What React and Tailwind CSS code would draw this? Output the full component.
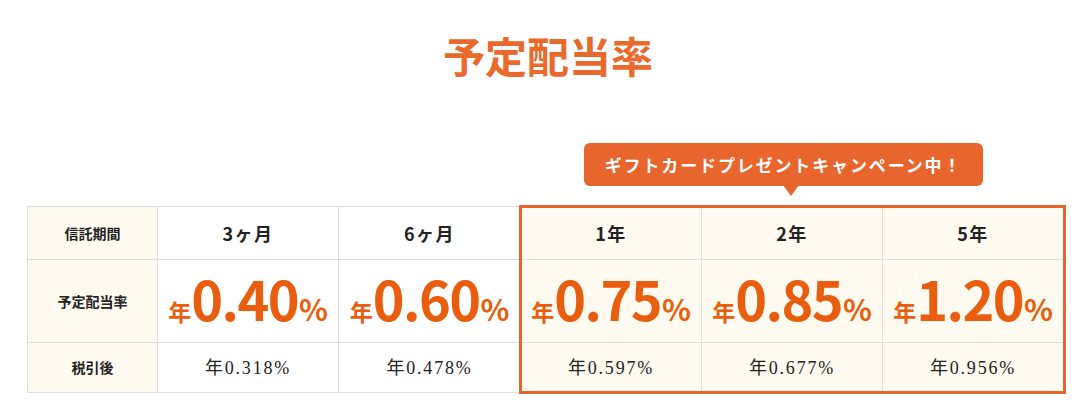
import React from "react";

const terms = [
  { label: "3ヶ月", rate: "0.40", net: "0.318", hl: false },
  { label: "6ヶ月", rate: "0.60", net: "0.478", hl: false },
  { label: "1年", rate: "0.75", net: "0.597", hl: true },
  { label: "2年", rate: "0.85", net: "0.677", hl: true },
  { label: "5年", rate: "1.20", net: "0.956", hl: true },
];

const jp = { fontFamily: '"Noto Sans CJK JP", "Noto Sans", sans-serif' };
const serif = { fontFamily: '"Liberation Serif", "Noto Sans CJK JP", serif' };

export default function App() {
  return (
    <div className="h-[414px] w-[1090px] overflow-hidden bg-white" style={jp}>
      <h1 className="pt-[27px] pl-[6px] text-center text-[42px] font-bold leading-[56px] text-[#ea6a2d]">予定配当率</h1>

      <div className="relative mx-auto mt-[60px] w-[1036px]">
        {/* campaign badge */}
        <div className="relative ml-[557px] h-[63px]">
          <div className="flex h-[43px] w-[399px] items-center justify-center rounded-[6px] bg-[#e8652d] text-[17px] font-bold tracking-[0.11em] text-white">
            ギフトカードプレゼントキャンペーン中！
          </div>
          <div className="absolute left-[199px] top-[42px] h-0 w-0 border-x-[8px] border-t-[11px] border-x-transparent border-t-[#e8652d]" />
        </div>

        <table className="w-[1036px] table-fixed border-collapse text-[#222]">
          <colgroup>
            <col className="w-[130px]" />
            <col className="w-[181px]" />
            <col className="w-[182px]" />
            <col className="w-[181px]" />
            <col className="w-[181px]" />
            <col className="w-[181px]" />
          </colgroup>
          <tbody>
            <tr className="h-[53px]">
              <th className="border border-[#dedede] bg-[#fefaef] text-[14px] font-bold">信託期間</th>
              {terms.map((t) => (
                <th
                  key={t.label}
                  className={`border border-[#dedede] text-[18px] font-bold tracking-[0.08em] ${t.hl ? "bg-[#fefaef]" : "bg-white"}`}
                >
                  {t.label}
                </th>
              ))}
            </tr>
            <tr className="h-[83px]">
              <th className="border border-[#dedede] bg-[#fefaef] text-[14px] font-bold">予定配当率</th>
              {terms.map((t) => (
                <td
                  key={t.label}
                  className={`border border-[#dedede] text-center font-bold text-[#e85d0e] ${t.hl ? "bg-[#fefaef]" : "bg-white"}`}
                >
                  <span className="text-[23px]">年</span>
                  <span className="text-[54px] leading-none tracking-[-0.03em]">{t.rate}</span>
                  <span className="ml-[1px] text-[30px]">%</span>
                </td>
              ))}
            </tr>
            <tr className="h-[50px]">
              <th className="border border-[#dedede] bg-[#fefaef] text-[14px] font-bold">税引後</th>
              {terms.map((t) => (
                <td
                  key={t.label}
                  className={`border border-[#dedede] pt-[2px] text-center text-[18px] tracking-[0.1em] ${t.hl ? "bg-[#fefaef]" : "bg-white"}`}
                  style={serif}
                >
                  年{t.net}%
                </td>
              ))}
            </tr>
          </tbody>
        </table>

        <div className="pointer-events-none absolute bottom-[-1px] left-[492px] top-[62px] w-[547px] border-[3px] border-[#e8652d]" />
      </div>
    </div>
  );
}
